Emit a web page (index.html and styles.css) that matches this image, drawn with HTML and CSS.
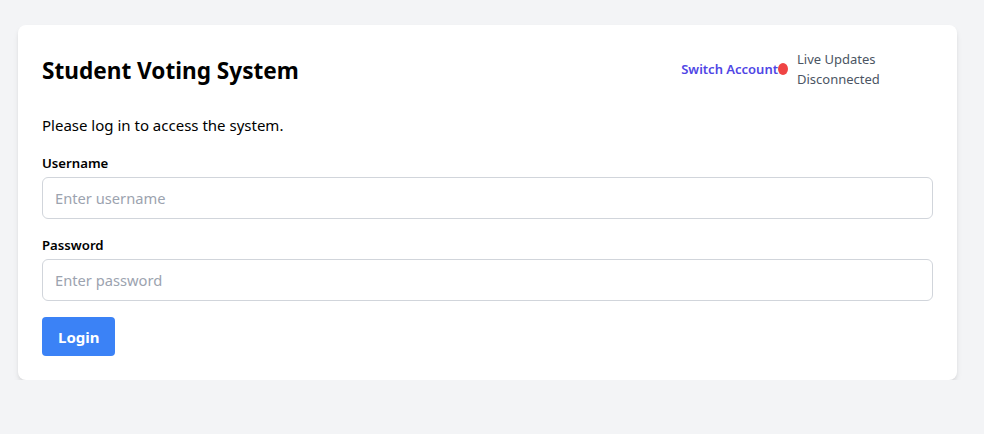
FILE: index.html
```html
<!DOCTYPE html>
<html lang="en">
<head>
<meta charset="utf-8">
<title>Student Voting System</title>
<link rel="stylesheet" href="styles.css">
</head>
<body>
<main class="page">
  <section class="card">
    <header class="card-header">
      <h1 class="title">Student Voting System</h1>
      <div class="header-right">
        <a class="switch-link" href="#">Switch Account</a>
        <span class="status-dot"></span>
        <span class="status-text">Live Updates Disconnected</span>
      </div>
    </header>
    <p class="intro">Please log in to access the system.</p>
    <form class="login-form">
      <div class="field">
        <label class="field-label" for="username">Username</label>
        <input class="field-input" id="username" type="text" placeholder="Enter username">
      </div>
      <div class="field">
        <label class="field-label" for="password">Password</label>
        <input class="field-input" id="password" type="password" placeholder="Enter password">
      </div>
      <button class="login-btn" type="button">Login</button>
    </form>
  </section>
</main>
</body>
</html>
```
FILE: styles.css
```css
* { box-sizing: border-box; }
html, body { margin: 0; padding: 0; }
body {
  background: #f3f4f6;
  font-family: "Noto Sans", "Open Sans", sans-serif;
  color: #111827;
}
.page {
  padding: 25px 27px 0 18px;
}
.card {
  background: #ffffff;
  border-radius: 8px;
  box-shadow: 0 4px 6px -1px rgba(0,0,0,0.1), 0 2px 4px -1px rgba(0,0,0,0.06);
  padding: 24px;
  width: 939px;
}
.card-header {
  display: flex;
  align-items: center;
  justify-content: space-between;
  height: 40px;
}
.title {
  margin: 0;
  font-size: 22.6px;
  line-height: 32px;
  font-weight: 700;
  color: #000;
  padding-top: 3px;
}
.header-right {
  display: flex;
  align-items: center;
}
.switch-link {
  color: #4f46e5;
  font-size: 13px;
  font-weight: 600;
  text-decoration: none;
}
.status-dot {
  width: 10px;
  height: 12px;
  border-radius: 50%;
  background: #ef4444;
  margin-right: 9px;
}
.status-text {
  width: 136px;
  font-size: 13px;
  line-height: 20px;
  color: #4b5563;
}
.intro {
  margin: 24px 0 16px;
  font-size: 15px;
  line-height: 24px;
  color: #000;
}
.field { margin-bottom: 16px; }
.field-label {
  display: block;
  font-size: 13.2px;
  line-height: 20px;
  font-weight: 600;
  color: #000;
  margin-bottom: 4px;
}
.field-input {
  display: block;
  width: 100%;
  height: 42px;
  padding: 8px 12px;
  border: 1px solid #d1d5db;
  border-radius: 6px;
  font-family: inherit;
  font-size: 14.7px;
  color: #111827;
  outline: none;
}
.field-input::placeholder { color: #9ca3af; }
.login-btn {
  display: block;
  height: 39px;
  padding: 0 16px;
  background: #3b82f6;
  color: #fff;
  border: 0;
  border-radius: 4px;
  font-family: inherit;
  font-size: 15px;
  font-weight: 700;
  cursor: pointer;
}
```
